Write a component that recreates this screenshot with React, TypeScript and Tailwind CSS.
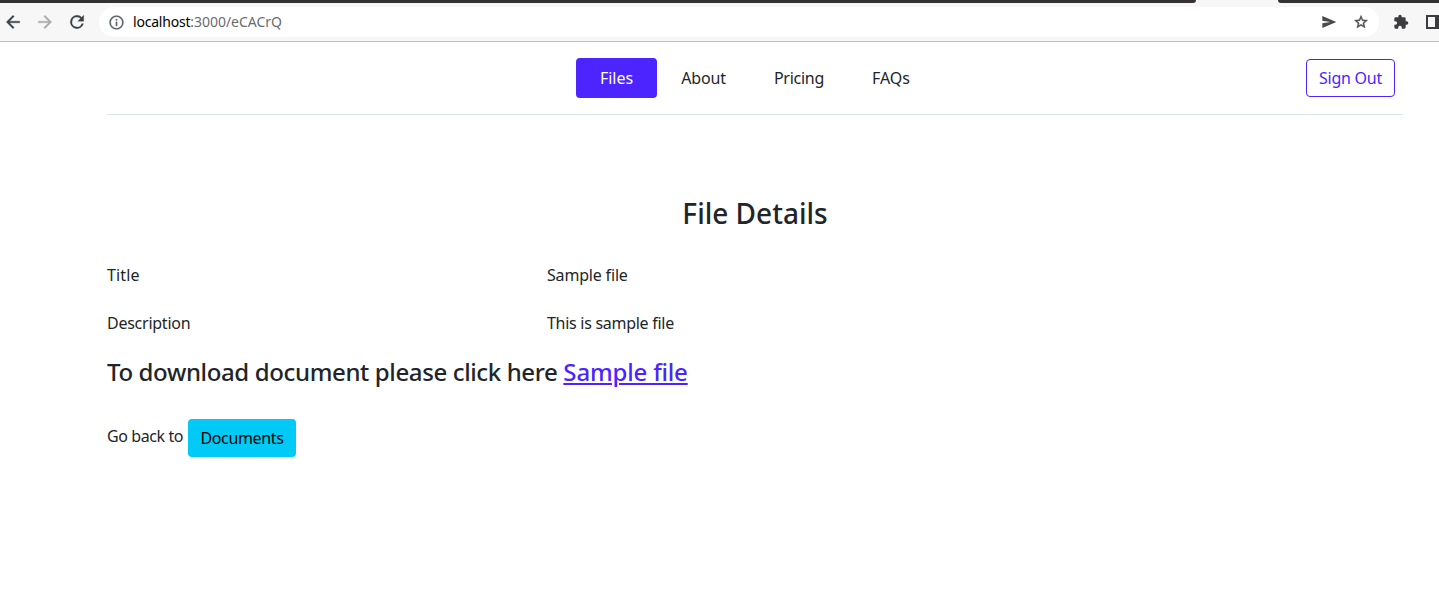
import React from 'react';

function BrowserBar() {
  return (
    <header className="flex h-[42px] flex-col border-b border-[#bdbdbf] bg-[#f7f7f7]">
      <div className="flex h-[3px] shrink-0 justify-between">
        <div className="w-[1196px] rounded-br-[4px] bg-[#333132]" />
        <div className="w-[161px] rounded-bl-[4px] bg-[#333132]" />
      </div>
      <div className="flex h-[38px] items-center overflow-hidden">
        <div className="flex w-[99px] shrink-0 items-center">
          <svg viewBox="0 0 24 24" className="ml-[3px] h-5 w-5 shrink-0" fill="#3c4043" stroke="#3c4043" strokeWidth="0.4"><path d="M20 11H7.83l5.59-5.59L12 4l-8 8 8 8 1.41-1.41L7.83 13H20z" /></svg>
          <svg viewBox="0 0 24 24" className="ml-3 h-5 w-5 shrink-0" fill="#a9aaac" stroke="#a9aaac" strokeWidth="0.4"><path d="M4 13h12.17l-5.59 5.59L12 20l8-8-8-8-1.41 1.41L16.17 11H4z" /></svg>
          <svg viewBox="0 0 24 24" className="ml-3 h-5 w-5 shrink-0" fill="#3c4043" stroke="#3c4043" strokeWidth="0.4"><path d="M17.65 6.35A7.96 7.96 0 0 0 12 4a8 8 0 1 0 7.73 10h-2.08A6 6 0 1 1 12 6c1.66 0 3.14.69 4.22 1.78L13 11h7V4z" /></svg>
        </div>
        <div className="flex h-[30px] w-[1280px] shrink-0 items-center rounded-full bg-white">
          <svg viewBox="0 0 24 24" className="ml-[9px] h-[17px] w-[17px] shrink-0" fill="#5f6368" stroke="#5f6368" strokeWidth="0.3"><path d="M11 7h2v2h-2zm0 4h2v6h-2zm1-9a10 10 0 1 0 0 20 10 10 0 0 0 0-20zm0 18a8 8 0 1 1 0-16 8 8 0 0 1 0 16z" /></svg>
          <p className="ml-2 whitespace-nowrap text-[14px] leading-5 text-[#6b6b6e]"><span className="tracking-[-0.2px] text-black">localhost</span><span className="tracking-[-0.04px]">:3000/eCACrQ</span></p>
          <svg viewBox="0 0 24 24" className="ml-auto h-4 w-4 shrink-0" fill="#4a4a4c"><path d="M2 21 23 12 2 3v7l12 2-12 2z" /></svg>
          <svg viewBox="0 0 24 24" className="mr-[10px] ml-4 h-4 w-4 shrink-0" fill="#4a4a4c" stroke="#4a4a4c" strokeWidth="0.6"><path d="m22 9.24-7.19-.62L12 2 9.19 8.63 2 9.24l5.46 4.73L5.82 21 12 17.27 18.18 21l-1.63-7.03zM12 15.4l-3.76 2.27 1-4.28-3.32-2.88 4.38-.38L12 6.1l1.71 4.04 4.38.38-3.32 2.88 1 4.28z" /></svg>
        </div>
        <svg viewBox="0 0 24 24" className="ml-[14px] h-4 w-4 shrink-0" fill="#3c3c3e"><path d="M20.5 11H19V7a2 2 0 0 0-2-2h-4V3.5a2.5 2.5 0 0 0-5 0V5H4a2 2 0 0 0-2 2v3.8h1.5a2.7 2.7 0 0 1 0 5.4H2V20a2 2 0 0 0 2 2h3.8v-1.5a2.7 2.7 0 0 1 5.4 0V22H17a2 2 0 0 0 2-2v-4h1.5a2.5 2.5 0 0 0 0-5z" /></svg>
        <svg viewBox="0 0 16 14" className="ml-[17px] h-[14px] w-4 shrink-0"><path d="M1 1h14v12H1z" fill="none" stroke="#3c3c3e" strokeWidth="2" /><path d="M9 0h7v14H9z" fill="#3c3c3e" /></svg>
      </div>
    </header>
  );
}

export default function App() {
  return (
    <div className="h-[603px] w-full overflow-hidden bg-white font-['Noto_Sans',sans-serif] text-base leading-6 text-[#212529]">
      <BrowserBar />
      <div className="ml-[107px] w-[1296px] whitespace-nowrap">
        <div className="flex h-[73px] items-center border-b border-[#dee2e6]">
          <nav className="ml-[469px] flex h-10 items-center">
            <a className="flex h-10 w-[81px] items-center justify-center rounded bg-[#4c24ff] text-white"><span>Files</span></a>
            <a className="flex w-[93px] justify-center tracking-[-0.15px]"><span>About</span></a>
            <a className="flex w-[98px] justify-center tracking-[-0.25px]"><span>Pricing</span></a>
            <a className="flex w-[86px] justify-center"><span>FAQs</span></a>
          </nav>
          <button className="mr-2 ml-auto flex h-[38px] w-[89px] items-center justify-center rounded border border-[#4c24ff] tracking-[-0.25px] text-[#4c24ff]"><span>Sign Out</span></button>
        </div>
        <main className="pt-[81px]">
          <h2 className="text-center text-[28px] leading-[34px] font-medium"><span>File Details</span></h2>
          <dl className="mt-[33px] grid grid-cols-[440px_1fr] gap-y-6">
            <dt className="tracking-[0.15px]"><span>Title</span></dt>
            <dd className="tracking-[-0.18px]"><span>Sample file</span></dd>
            <dt className="tracking-[-0.25px]"><span>Description</span></dt>
            <dd className="tracking-[-0.28px]"><span>This is sample file</span></dd>
          </dl>
          <h4 className="mt-[22px] text-2xl leading-[29px] font-medium tracking-[-0.37px]"><span>To download document please click here</span> <a className="tracking-[-0.18px] text-[#4c24ff] underline"><span>Sample file</span></a></h4>
          <div className="mt-[33px] flex">
            <span className="mt-[5px] w-[76px] tracking-[-0.4px]">Go back to</span>
            <button className="ml-[5px] flex h-[38px] w-[108px] items-center justify-center rounded bg-[#00caf5] tracking-[-0.35px] text-black"><span>Documents</span></button>
          </div>
        </main>
      </div>
    </div>
  );
}
